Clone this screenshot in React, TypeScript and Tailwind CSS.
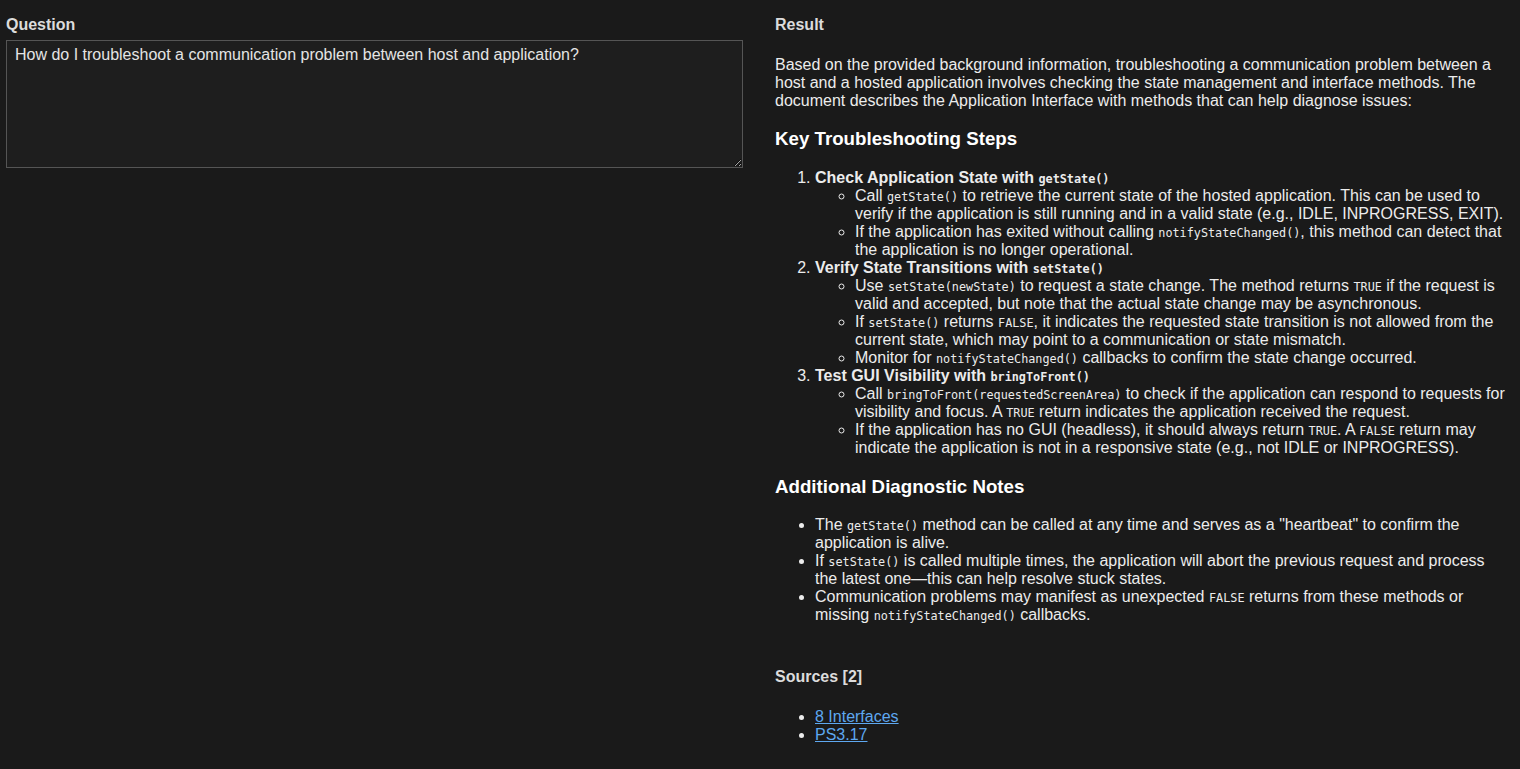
import React from "react";

const C = ({ children }: { children: React.ReactNode }) => (
  <code className="font-['DejaVu_Sans_Mono',monospace] text-[11.8px] leading-[1]">{children}</code>
);

export default function App() {
  return (
    <div className="min-h-[769px] w-full bg-[#1a1a1a] font-['Liberation_Sans',Arial,sans-serif] text-[16px] leading-[18px] text-[#ececec]">
      <div className="grid grid-cols-[737px_1fr] gap-8 pl-[6px] pr-[12px] pt-[16px] pb-6">
        {/* Question column */}
        <div>
          <div className="font-bold text-[#dcdcdc]">Question</div>
          <textarea
            readOnly
            defaultValue="How do I troubleshoot a communication problem between host and application?"
            className="mt-[6px] block h-[128px] w-full border border-[#555555] bg-[#1e1e1e] px-2 pt-[5px] font-['Liberation_Sans',Arial,sans-serif] text-[16px] leading-[18px] text-[#e4e4e4] outline-none [color-scheme:dark]"
          />
        </div>

        {/* Result column */}
        <div>
          <div className="font-bold text-[#dcdcdc]">Result</div>
          <p className="mt-[22px]">
            Based on the provided background information, troubleshooting a communication problem between a host and a hosted application involves checking the state management and interface methods. The document describes the Application Interface with methods that can help diagnose issues:
          </p>

          <h3 className="mt-[18px] text-[18.72px] leading-[22px] font-bold text-white">Key Troubleshooting Steps</h3>

          <ol className="mt-[19px] list-decimal pl-10">
            <li>
              <strong>
                Check Application State with <C>getState()</C>
              </strong>
              <ul className="list-[circle] pl-10">
                <li>
                  Call <C>getState()</C> to retrieve the current state of the hosted application. This can be used to verify if the application is still running and in a valid state (e.g., IDLE, INPROGRESS, EXIT).
                </li>
                <li>
                  If the application has exited without calling <C>notifyStateChanged()</C>, this method can detect that the application is no longer operational.
                </li>
              </ul>
            </li>
            <li>
              <strong>
                Verify State Transitions with <C>setState()</C>
              </strong>
              <ul className="list-[circle] pl-10">
                <li>
                  Use <C>setState(newState)</C> to request a state change. The method returns <C>TRUE</C> if the request is valid and accepted, but note that the actual state change may be asynchronous.
                </li>
                <li>
                  If <C>setState()</C> returns <C>FALSE</C>, it indicates the requested state transition is not allowed from the current state, which may point to a communication or state mismatch.
                </li>
                <li>
                  Monitor for <C>notifyStateChanged()</C> callbacks to confirm the state change occurred.
                </li>
              </ul>
            </li>
            <li>
              <strong>
                Test GUI Visibility with <C>bringToFront()</C>
              </strong>
              <ul className="list-[circle] pl-10">
                <li>
                  Call <C>bringToFront(requestedScreenArea)</C> to check if the application can respond to requests for visibility and focus. A <C>TRUE</C> return indicates the application received the request.
                </li>
                <li>
                  If the application has no GUI (headless), it should always return <C>TRUE</C>. A <C>FALSE</C> return may indicate the application is not in a responsive state (e.g., not IDLE or INPROGRESS).
                </li>
              </ul>
            </li>
          </ol>

          <h3 className="mt-[19px] text-[18.72px] leading-[22px] font-bold text-white">Additional Diagnostic Notes</h3>

          <ul className="mt-[18px] list-disc pl-10">
            <li>
              The <C>getState()</C> method can be called at any time and serves as a "heartbeat" to confirm the application is alive.
            </li>
            <li>
              If <C>setState()</C> is called multiple times, the application will abort the previous request and process the latest one—this can help resolve stuck states.
            </li>
            <li>
              Communication problems may manifest as unexpected <C>FALSE</C> returns from these methods or missing <C>notifyStateChanged()</C> callbacks.
            </li>
          </ul>

          <h4 className="mt-[44px] font-bold text-[#dcdcdc]">Sources [2]</h4>
          <ul className="mt-[22px] list-disc pl-10">
            <li>
              <a href="#" className="text-[#5ea8f0] underline">8 Interfaces</a>
            </li>
            <li>
              <a href="#" className="text-[#5ea8f0] underline">PS3.17</a>
            </li>
          </ul>
        </div>
      </div>
    </div>
  );
}
